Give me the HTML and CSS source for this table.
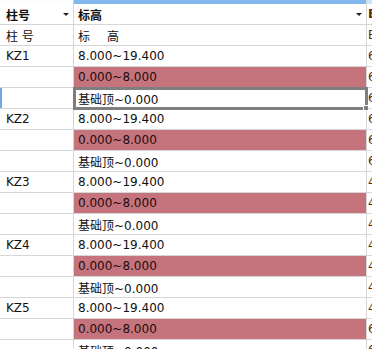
FILE: index.html
```html
<!DOCTYPE html>
<html>
<head>
<meta charset="utf-8">
<link rel="stylesheet" href="styles.css">
</head>
<body>
<div class="grid">
  <div class="strip s0"></div><div class="strip s1"></div><div class="strip s2"></div>

  <div class="cell hd"><span>柱号</span><i class="arrow"></i></div>
  <div class="cell hd c1"><span>标高</span><i class="arrow"></i></div>
  <div class="cell hd c2">B</div>

  <div class="cell">柱 号</div>
  <div class="cell c1">标<span class="gap"></span>高</div>
  <div class="cell c2">B</div>

  <div class="cell">KZ1</div><div class="cell c1">8.000~19.400</div><div class="cell c2">6</div>
  <div class="cell"></div><div class="cell c1 pink">0.000~8.000</div><div class="cell c2">6</div>
  <div class="cell cur"></div><div class="cell c1 sel">基础顶~0.000<i class="handle"></i></div><div class="cell c2">6</div>

  <div class="cell">KZ2</div><div class="cell c1">8.000~19.400</div><div class="cell c2">6</div>
  <div class="cell"></div><div class="cell c1 pink">0.000~8.000</div><div class="cell c2">6</div>
  <div class="cell"></div><div class="cell c1">基础顶~0.000</div><div class="cell c2">6</div>

  <div class="cell">KZ3</div><div class="cell c1">8.000~19.400</div><div class="cell c2">4</div>
  <div class="cell"></div><div class="cell c1 pink">0.000~8.000</div><div class="cell c2">4</div>
  <div class="cell"></div><div class="cell c1">基础顶~0.000</div><div class="cell c2">4</div>

  <div class="cell">KZ4</div><div class="cell c1">8.000~19.400</div><div class="cell c2">4</div>
  <div class="cell"></div><div class="cell c1 pink">0.000~8.000</div><div class="cell c2">4</div>
  <div class="cell"></div><div class="cell c1">基础顶~0.000</div><div class="cell c2">4</div>

  <div class="cell">KZ5</div><div class="cell c1">8.000~19.400</div><div class="cell c2">4</div>
  <div class="cell"></div><div class="cell c1 pink">0.000~8.000</div><div class="cell c2">6</div>
  <div class="cell"></div><div class="cell c1">基础顶~0.000</div><div class="cell c2">6</div>
</div>
</body>
</html>
```

FILE: styles.css
```css
html, body {
  margin: 0;
  padding: 0;
  background: #ffffff;
  overflow: hidden;
}
.grid {
  display: grid;
  grid-template-columns: 74px 293px 5px;
  grid-auto-rows: 21px;
  grid-template-rows: 4px;
  font-family: "DejaVu Sans", "Noto Sans CJK SC", sans-serif;
  font-size: 12px;
  color: #111;
  width: 372px;
}
.strip { height: 4px; }
.s0 { background: #fbfdff; border-right: 1px solid #d4d4d4; box-sizing: border-box; }
.s1 { background: #82b8ee; border-right: 1px solid #d4d4d4; box-sizing: border-box; }
.s2 { background: #cfe3f7; }
.cell {
  box-sizing: border-box;
  border-right: 1px solid #d6d6d6;
  border-bottom: 1px solid #d6d6d6;
  padding-left: 6px;
  display: flex;
  align-items: center;
  white-space: nowrap;
  position: relative;
}
.c1 { padding-left: 4px; }
.c2 { padding-left: 1px; border-right: none; color: #5a2a00; overflow: hidden; }
.hd { font-weight: bold; justify-content: space-between; padding-right: 4px; }
.hd.c2 { justify-content: flex-start; padding-right: 0; }
.arrow {
  display: block;
  width: 0;
  height: 0;
  border-left: 3px solid transparent;
  border-right: 3px solid transparent;
  border-top: 3px solid #222;
  margin-top: 1px;
}
.gap { display: inline-block; width: 17px; }
.pink { background: #c5737c; color: #1d0d0f; }
.cur { box-shadow: inset 2px 0 0 #6fa8e6; }
.sel {
  z-index: 5;
  outline: 3px solid #7f7f7f;
  outline-offset: -2px;
}
.handle {
  position: absolute;
  right: -2px;
  bottom: -2px;
  width: 4px;
  height: 4px;
  background: #7f7f7f;
  border-left: 1px solid #fff;
  border-top: 1px solid #fff;
}
```
